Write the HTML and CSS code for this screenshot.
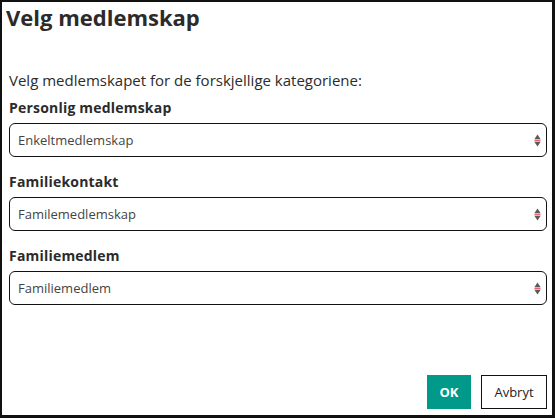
FILE: index.html
```html
<!DOCTYPE html>
<html lang="no">
<head>
  <meta charset="UTF-8" />
  <title>Velg medlemskap</title>
  <link rel="stylesheet" href="styles.css">
</head>
<body>
  <div class="dialog">
    <h1>Velg medlemskap</h1>
    <p class="intro">Velg medlemskapet for de forskjellige kategoriene:</p>

    <label class="field">
      <span class="field-label">Personlig medlemskap</span>
      <span class="select">
        <span>Enkeltmedlemskap</span>
        <svg class="arrows" width="7" height="13" viewBox="0 0 7 13"><path d="M3.5 0.5 L6.5 5 L0.5 5 Z" fill="#5a5a5a"/><rect x="0.5" y="5.5" width="6" height="2" fill="#e8636b"/><path d="M0.5 8 L6.5 8 L3.5 12.5 Z" fill="#5a5a5a"/></svg>
      </span>
    </label>

    <label class="field">
      <span class="field-label">Familiekontakt</span>
      <span class="select">
        <span>Familemedlemskap</span>
        <svg class="arrows" width="7" height="13" viewBox="0 0 7 13"><path d="M3.5 0.5 L6.5 5 L0.5 5 Z" fill="#5a5a5a"/><rect x="0.5" y="5.5" width="6" height="2" fill="#e8636b"/><path d="M0.5 8 L6.5 8 L3.5 12.5 Z" fill="#5a5a5a"/></svg>
      </span>
    </label>

    <label class="field">
      <span class="field-label">Familiemedlem</span>
      <span class="select">
        <span>Familiemedlem</span>
        <svg class="arrows" width="7" height="13" viewBox="0 0 7 13"><path d="M3.5 0.5 L6.5 5 L0.5 5 Z" fill="#5a5a5a"/><rect x="0.5" y="5.5" width="6" height="2" fill="#e8636b"/><path d="M0.5 8 L6.5 8 L3.5 12.5 Z" fill="#5a5a5a"/></svg>
      </span>
    </label>

    <div class="actions">
      <button class="btn btn-ok">OK</button>
      <button class="btn btn-cancel">Avbryt</button>
    </div>
  </div>
</body>
</html>
```

FILE: styles.css
```css
body {
  margin: 0;
  padding: 0;
  font-family: 'Open Sans', 'Noto Sans', sans-serif;
  background: #fff;
  color: #2b2b2b;
}

.dialog {
  box-sizing: border-box;
  width: 555px;
  height: 418px;
  border: 2px solid #111;
  border-right-width: 3px;
  border-bottom-width: 3px;
  box-shadow: 0 0 0 1px #888;
  padding: 0 5px 0 7px;
  display: flex;
  flex-direction: column;
}

h1 {
  margin: 2px 0 0 -3px;
  font-size: 22px;
  font-weight: 700;
  color: #2b2b2b;
  line-height: 26px;
}

.intro {
  margin: 41px 0 10px 0;
  font-size: 15px;
  line-height: 18px;
}

.field {
  display: flex;
  flex-direction: column;
  margin-bottom: 16px;
}

.field-label {
  font-size: 14px;
  font-weight: 700;
  letter-spacing: 0.2px;
  line-height: 18px;
  margin-bottom: 6px;
}

.select {
  box-sizing: border-box;
  height: 34px;
  border: 1px solid #111;
  border-radius: 6px;
  padding: 0 5px 0 8px;
  display: flex;
  align-items: center;
  justify-content: space-between;
  font-size: 13px;
  color: #444;
}

.actions {
  margin-top: auto;
  margin-bottom: 6px;
  display: flex;
  justify-content: flex-end;
  gap: 10px;
}

.btn {
  font-family: 'Open Sans', 'Noto Sans', sans-serif;
  height: 34px;
  font-size: 13px;
  cursor: pointer;
}

.btn-ok {
  width: 44px;
  background: #00998a;
  color: #fff;
  border: none;
  font-weight: 700;
}

.btn-cancel {
  width: 66px;
  background: #fff;
  color: #222;
  border: 1px solid #111;
}
```
